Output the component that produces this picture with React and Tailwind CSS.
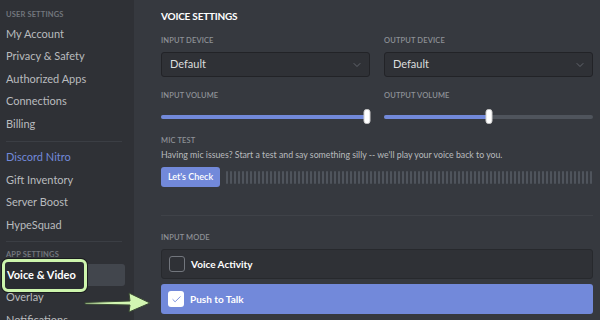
import { Check, ChevronDown } from 'lucide-react';

const userItems = ['My Account', 'Privacy & Safety', 'Authorized Apps', 'Connections', 'Billing'];
const extraItems = ['Gift Inventory', 'Server Boost', 'HypeSquad'];

function NavItem({ label, active, accent }) {
  return (
    <div
      className={`flex h-[22.5px] w-[123px] shrink-0 items-center rounded-[3px] px-[4px] text-[11px] ${
        active ? 'bg-[#42464d] font-bold text-white' : accent ? 'text-[#7289da]' : 'text-[#b9bbbe]'
      }`}
    >
      {label}
    </div>
  );
}

function Header({ children, className = '' }) {
  return (
    <div className={`flex h-[14px] items-center px-[4px] text-[7.5px] font-bold uppercase tracking-[0.02em] text-[#72767d] ${className}`}>
      {children}
    </div>
  );
}

function Label({ children, className = '' }) {
  return (
    <div className={`flex h-[10px] items-center text-[7.5px] font-semibold uppercase tracking-[0.02em] text-[#8e9297] ${className}`}>
      {children}
    </div>
  );
}

function Select() {
  return (
    <div className="mt-[6px] flex h-[25px] items-center justify-between rounded-[3px] border border-[#222327] bg-[#2f3136] pl-[8px] pr-[6px] text-[11px] text-[#dcddde]">
      <span>Default</span>
      <ChevronDown size={12} strokeWidth={1.5} className="text-[#72767d]" />
    </div>
  );
}

function Slider({ value }) {
  return (
    <div className="relative mt-[10px] flex h-[12px] items-center">
      <div className="h-[4px] w-full rounded-full bg-[#4f545c]">
        <div className="h-full rounded-full bg-[#7289da]" style={{ width: `${value}%` }} />
      </div>
      <div
        className="absolute top-[-2px] h-[15px] w-[7px] -translate-x-1/2 rounded-[3px] border border-[#cccccc] bg-white"
        style={{ left: `${value}%` }}
      />
    </div>
  );
}

export default function App() {
  const bars = Array.from({ length: 92 });

  return (
    <div className="relative flex h-[320px] w-[600px] overflow-hidden bg-[#36393f] font-['Lato',sans-serif]">
      {/* sidebar */}
      <aside className="relative w-[134px] shrink-0 bg-[#2f3136] pl-[2px] pt-[8px]">
        <Header>User Settings</Header>
        <div className="mt-[0.75px]">
          {userItems.map((item) => (
            <NavItem key={item} label={item} />
          ))}
        </div>
        <div className="mx-[4px] mb-[4.5px] mt-[5.5px] h-px w-[116px] bg-[#3b3e44]" />
        <NavItem label="Discord Nitro" accent />
        {extraItems.map((item) => (
          <NavItem key={item} label={item} />
        ))}
        <div className="mx-[4px] mb-[6px] mt-[4.75px] h-px w-[116px] bg-[#3b3e44]" />
        <Header>App Settings</Header>
        <div className="mt-[1.75px]">
          <NavItem label="Voice & Video" active />
          <NavItem label="Overlay" />
          <NavItem label="Notifications" />
        </div>

        {/* annotation: highlight box */}
        <div className="absolute left-[2px] top-[259px] flex h-[33px] w-[85px] items-center rounded-[6px] border-[3px] border-[#cdf5ad] bg-[#2a2c31] pl-[2px] text-[11px] font-bold text-white shadow-[0_0_0_1px_#1a1b1e]">
          Voice &amp; Video
        </div>
      </aside>

      {/* annotation: arrow */}
      <svg className="absolute left-[84px] top-[290px]" width="68" height="24" viewBox="0 0 68 24">
        <path
          d="M1 12.5 L46 11 L45 3 L66 13 L45 22 L46 15 L1 14 Z"
          fill="#d2f6b2"
          stroke="#3a4a34"
          strokeWidth="1"
          strokeLinejoin="round"
        />
      </svg>

      {/* main */}
      <main className="flex flex-1 flex-col pl-[27px] pr-[7px] pt-[9px]">
        <div className="flex h-[14px] shrink-0 items-center text-[10px] font-bold uppercase tracking-[-0.02em] text-white">
          Voice Settings
        </div>

        <div className="grid shrink-0 grid-cols-2 gap-x-[14px]">
          <div>
            <Label className="mt-[13px]">Input Device</Label>
            <Select />
            <Label className="mt-[14px]">Input Volume</Label>
            <Slider value={98.8} />
          </div>
          <div>
            <Label className="mt-[13px]">Output Device</Label>
            <Select />
            <Label className="mt-[14px]">Output Volume</Label>
            <Slider value={50} />
          </div>
        </div>

        <Label className="mt-[13px] shrink-0">Mic Test</Label>
        <div className="mt-[3px] flex h-[12px] shrink-0 items-center whitespace-nowrap text-[8.75px] text-[#b9bbbe]">
          Having mic issues? Start a test and say something silly -- we'll play your voice back to you.
        </div>
        <div className="mt-[6px] flex h-[20px] shrink-0 items-center gap-[6px]">
          <button className="flex h-[20px] w-[59px] items-center justify-center rounded-[3px] bg-[#7289da] text-[9px] font-semibold text-white">
            Let's Check
          </button>
          <div className="flex h-[13px] flex-1 gap-[2px] overflow-hidden">
            {bars.map((_, i) => (
              <div key={i} className="h-full w-[2px] shrink-0 rounded-[1px] bg-[#4f545c]" />
            ))}
          </div>
        </div>

        <div className="mt-[28px] h-px shrink-0 bg-[#3f4248]" />

        <Label className="mt-[17px] shrink-0">Input Mode</Label>
        <div className="mt-[6px] flex h-[30px] shrink-0 items-center gap-[6px] rounded-[3px] border border-[#27292d] bg-[#2f3136] pl-[7px] text-[10px] font-bold text-white">
          <div className="h-[16px] w-[16px] rounded-[3px] border border-[#72767d]" />
          Voice Activity
        </div>
        <div className="mt-[5px] flex h-[30px] shrink-0 items-center gap-[6px] rounded-[3px] bg-[#7289da] pl-[7px] text-[10px] font-bold text-white">
          <div className="flex h-[16px] w-[16px] items-center justify-center rounded-[3px] bg-white">
            <Check size={11} strokeWidth={2} className="text-[#7289da]" />
          </div>
          Push to Talk
        </div>
      </main>
    </div>
  );
}
